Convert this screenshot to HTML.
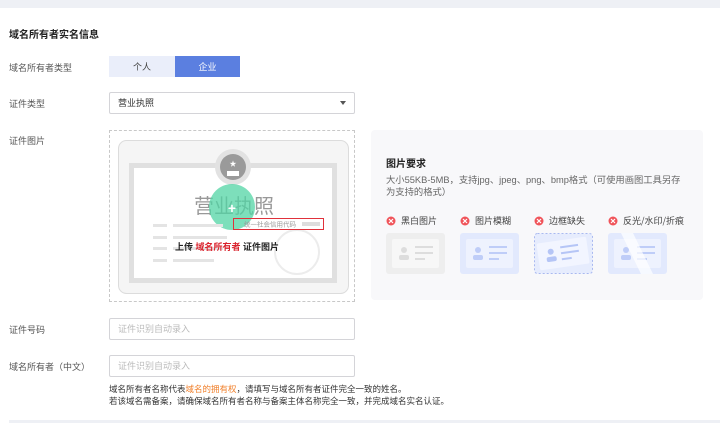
<!DOCTYPE html>
<html><head><meta charset="utf-8"><style>
*{margin:0;padding:0;box-sizing:border-box}
body{width:720px;height:423px;overflow:hidden;background:#fff;font-family:"Liberation Sans","Noto Sans CJK SC",sans-serif;color:#333;position:relative;font-size:9px}
.a{position:absolute;white-space:nowrap}
.lbl{color:#555;font-size:9px}
.inp{position:absolute;left:109px;width:246px;height:22px;border:1px solid #d4d4d8;border-radius:2px;background:#fff;color:#bbb;font-size:9px;line-height:20px;padding-left:8px}
</style></head><body>
<div class="a" style="left:0;top:0;width:720px;height:8px;background:#eef0f5"></div>
<div class="a" style="left:9px;top:26px;font-size:10px;font-weight:bold;color:#222">域名所有者实名信息</div>

<div class="a lbl" style="left:9px;top:61px">域名所有者类型</div>
<div class="a" style="left:109px;top:56px;width:66px;height:21px;background:#eaeefa;color:#444;text-align:center;line-height:22px">个人</div>
<div class="a" style="left:175px;top:56px;width:65px;height:21px;background:#5b7fe0;color:#fff;text-align:center;line-height:22px">企业</div>

<div class="a lbl" style="left:9px;top:97px">证件类型</div>
<div class="inp" style="top:92px;color:#333">营业执照</div>
<div class="a" style="left:340px;top:101px;width:0;height:0;border-left:3px solid transparent;border-right:3px solid transparent;border-top:4px solid #555"></div>

<div class="a lbl" style="left:9px;top:134px">证件图片</div>
<div class="a" style="left:109px;top:130px;width:246px;height:172px;border:1px dashed #c8c8c8"></div>
<svg class="a" style="left:109px;top:130px" width="246" height="172">
<rect x="9.5" y="10.5" width="230" height="153" rx="8" fill="#f5f5f5" stroke="#dcdcdc"/>
<rect x="20" y="33" width="208" height="120" fill="#e0e0e0"/>
<rect x="25" y="38" width="198" height="110" fill="#fff"/>
<circle cx="124" cy="37" r="18" fill="#e2e2e2"/>
<circle cx="124" cy="37" r="13" fill="#9a9a9a"/>
<text x="124" y="36" font-size="7" fill="#fff" text-anchor="middle">★</text>
<rect x="118" y="41" width="12" height="5" fill="#fff"/>
<circle cx="188" cy="122" r="22" fill="none" stroke="#ececec" stroke-width="2"/>
<text x="85" y="83" font-size="20" fill="#999" font-family="Noto Sans CJK SC,sans-serif">营业执照</text>
<circle cx="123" cy="77" r="23" fill="#52d4a4" opacity="0.75"/>
<text x="123" y="83" font-size="14" fill="#fff" text-anchor="middle" font-weight="bold">+</text>
<rect x="124.5" y="88.5" width="90" height="11" fill="none" stroke="#e0313b"/>
<text x="135" y="96.5" font-size="6.5" fill="#999" font-family="Noto Sans CJK SC,sans-serif">统一社会信用代码</text>
<rect x="193" y="92" width="18" height="4" fill="#ddd"/>
<g fill="#e4e4e4"><rect x="44" y="94" width="14" height="3"/><rect x="64" y="94" width="50" height="3"/><rect x="44" y="106" width="14" height="3"/><rect x="64" y="106" width="54" height="3"/><rect x="44" y="117" width="14" height="3"/><rect x="64" y="117" width="50" height="3"/><rect x="44" y="129" width="14" height="3"/><rect x="64" y="129" width="41" height="3"/></g>
</svg>
<div class="a" style="left:175px;top:240px;font-size:9px;font-weight:bold;color:#222">上传 <span style="color:#d9232d">域名所有者</span> 证件图片</div>

<div class="a" style="left:371px;top:130px;width:332px;height:170px;background:#f8f8fa;border-radius:4px"></div>
<div class="a" style="left:386px;top:155px;font-size:10px;font-weight:bold;color:#222">图片要求</div>
<div class="a" style="left:386px;top:174px;color:#666;line-height:12px;white-space:normal;width:300px;font-size:9.3px">大小55KB-5MB，支持jpg、jpeg、png、bmp格式（可使用画图工具另存为支持的格式）</div>
<svg class="a" style="left:371px;top:210px" width="332" height="70">
<g fill="#f0545a"><circle cx="20" cy="11" r="4.5"/><circle cx="94" cy="11" r="4.5"/><circle cx="168" cy="11" r="4.5"/><circle cx="242" cy="11" r="4.5"/></g>
<g stroke="#fff" stroke-width="1.2"><path d="M18 9l4 4M22 9l-4 4"/><path d="M92 9l4 4M96 9l-4 4"/><path d="M166 9l4 4M170 9l-4 4"/><path d="M240 9l4 4M244 9l-4 4"/></g>
<g font-size="9" fill="#444" font-family="Noto Sans CJK SC,sans-serif"><text x="30" y="14">黑白图片</text><text x="104" y="14">图片模糊</text><text x="178" y="14">边框缺失</text><text x="252" y="14">反光/水印/折痕</text></g>
<rect x="15" y="23" width="59" height="41" rx="3" fill="#eeeeee"/><rect x="21" y="29" width="47" height="29" rx="2" fill="#f7f7f7"/><circle cx="33" cy="40" r="3" fill="#ddd"/><rect x="28" y="45" width="10" height="5" rx="2" fill="#ddd"/><g fill="#ddd"><rect x="44" y="36" width="18" height="2"/><rect x="44" y="42" width="18" height="2"/><rect x="44" y="48" width="10" height="2"/></g>
<rect x="89" y="23" width="59" height="41" rx="3" fill="#e2e9fd"/><rect x="95" y="29" width="47" height="29" rx="2" fill="#eef2fe"/><circle cx="107" cy="40" r="3" fill="#bfcdf8"/><rect x="102" y="45" width="10" height="5" rx="2" fill="#bfcdf8"/><g fill="#bfcdf8"><rect x="118" y="36" width="18" height="2"/><rect x="118" y="42" width="18" height="2"/><rect x="118" y="48" width="10" height="2"/></g>
<rect x="163.5" y="23.5" width="58" height="40" rx="3" fill="#e6ecfd" stroke="#a9b9f0" stroke-dasharray="2 2"/><g transform="rotate(-8 192 43)"><rect x="167" y="30" width="50" height="27" rx="2" fill="#f2f5ff"/><circle cx="180" cy="40" r="3" fill="#b5c5f6"/><rect x="175" y="45" width="10" height="5" rx="2" fill="#b5c5f6"/><g fill="#b5c5f6"><rect x="190" y="36" width="18" height="2"/><rect x="190" y="42" width="18" height="2"/><rect x="190" y="48" width="10" height="2"/></g></g>
<rect x="237" y="23" width="59" height="41" rx="3" fill="#e2e9fd"/><rect x="243" y="29" width="47" height="29" rx="2" fill="#eef2fe"/><circle cx="255" cy="40" r="3" fill="#bfcdf8"/><rect x="250" y="45" width="10" height="5" rx="2" fill="#bfcdf8"/><g fill="#bfcdf8"><rect x="266" y="36" width="18" height="2"/><rect x="266" y="42" width="18" height="2"/><rect x="266" y="48" width="10" height="2"/></g><path d="M250 23h12l20 41h-12z" fill="#fff" opacity="0.7"/>
</svg>

<div class="a lbl" style="left:9px;top:323px">证件号码</div>
<div class="inp" style="top:318px">证件识别自动录入</div>
<div class="a lbl" style="left:9px;top:360px">域名所有者（中文）</div>
<div class="inp" style="top:355px">证件识别自动录入</div>
<div class="a" style="left:109px;top:383px;color:#333;font-size:8.5px;line-height:12px">域名所有者名称代表<span style="color:#f07f2a">域名的拥有权</span>，请填写与域名所有者证件完全一致的姓名。<br>若该域名需备案，请确保域名所有者名称与备案主体名称完全一致，并完成域名实名认证。</div>
<div class="a" style="left:9px;top:420px;width:711px;height:3px;background:#eef0f5"></div>
</body></html>
